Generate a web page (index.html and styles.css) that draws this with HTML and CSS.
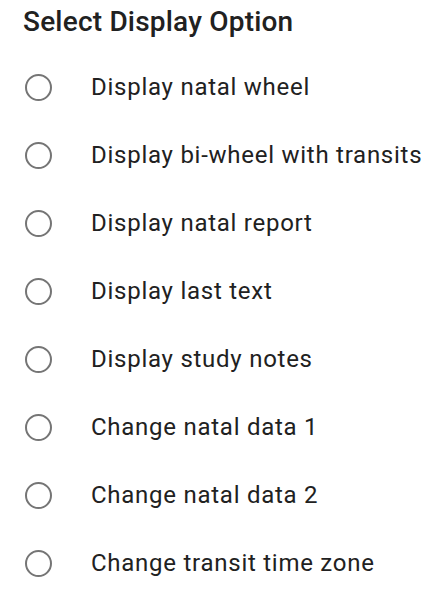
FILE: index.html
```html
<!DOCTYPE html>
<html>
<head>
<meta charset="utf-8">
<link rel="stylesheet" href="styles.css">
</head>
<body>
<div class="dialog">
  <h1 class="title">Select Display Option</h1>
  <ul class="options">
    <li class="option"><span class="radio"></span><span class="label">Display natal wheel</span></li>
    <li class="option"><span class="radio"></span><span class="label">Display bi-wheel with transits</span></li>
    <li class="option"><span class="radio"></span><span class="label">Display natal report</span></li>
    <li class="option"><span class="radio"></span><span class="label">Display last text</span></li>
    <li class="option"><span class="radio"></span><span class="label">Display study notes</span></li>
    <li class="option"><span class="radio"></span><span class="label">Change natal data 1</span></li>
    <li class="option"><span class="radio"></span><span class="label">Change natal data 2</span></li>
    <li class="option"><span class="radio"></span><span class="label">Change transit time zone</span></li>
  </ul>
</div>
</body>
</html>
```
FILE: styles.css
```css
html, body {
  margin: 0;
  padding: 0;
  background: #ffffff;
}
body {
  font-family: Roboto, "Liberation Sans", sans-serif;
  color: #212121;
  width: 446px;
  height: 592px;
  overflow: hidden;
}
.dialog {
  padding-left: 23px;
}
.title {
  margin: 0 0 10px 0;
  font-size: 28px;
  font-weight: 500;
  line-height: 43px;
  letter-spacing: 0.2px;
  color: #212121;
}
.options {
  list-style: none;
  margin: 0;
  padding: 0;
}
.option {
  display: flex;
  align-items: center;
  height: 68px;
}
.radio {
  box-sizing: border-box;
  width: 27px;
  height: 27px;
  margin-left: 2px;
  border: 2.5px solid #757575;
  border-radius: 50%;
  flex: none;
}
.label {
  margin-left: 39px;
  font-size: 24px;
  line-height: 28px;
  letter-spacing: 0.74px;
  color: #212121;
}
```
